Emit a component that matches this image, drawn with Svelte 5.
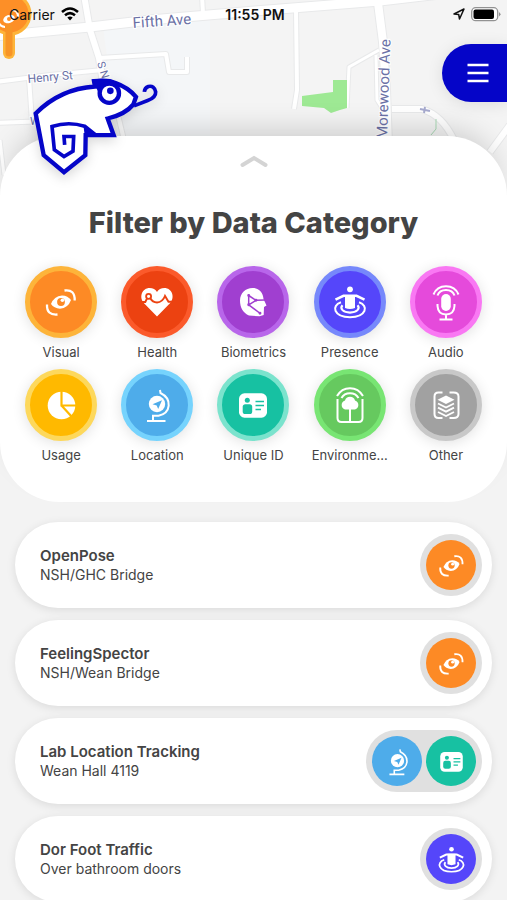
<script lang="ts">
  type Category = { id: string; label: string; fill: string; ring: string };

  const categories: Category[] = [
    { id: "visual", label: "Visual", fill: "#fd8a25", ring: "#fdb43a" },
    { id: "health", label: "Health", fill: "#ec4211", ring: "#fb5a2b" },
    { id: "biometrics", label: "Biometrics", fill: "#a03fd0", ring: "#b866ea" },
    { id: "presence", label: "Presence", fill: "#5546fa", ring: "#7688fb" },
    { id: "audio", label: "Audio", fill: "#e54adb", ring: "#f978f3" },
    { id: "usage", label: "Usage", fill: "#ffb900", ring: "#fdd85c" },
    { id: "location", label: "Location", fill: "#4eacea", ring: "#76d3fd" },
    { id: "unique", label: "Unique ID", fill: "#17c1a2", ring: "#7be3cd" },
    { id: "environment", label: "Environme...", fill: "#66c95f", ring: "#78e573" },
    { id: "other", label: "Other", fill: "#a1a1a1", ring: "#c8c8c8" },
  ];

  const items = [
    { name: "OpenPose", place: "NSH/GHC Bridge", tags: ["visual"] },
    { name: "FeelingSpector", place: "NSH/Wean Bridge", tags: ["visual"] },
    { name: "Lab Location Tracking", place: "Wean Hall 4119", tags: ["location", "unique"] },
    { name: "Dor Foot Traffic", place: "Over bathroom doors", tags: ["presence"] },
  ];

  const streets = [
    { d: "M-5 36 L90 27 L150 20 L255 11 L380 1 L440 -6", w: 10 },
    { d: "M84 -5 L90 30 L99 58 L103 82", w: 7 },
    { d: "M99 58 L166 54 L169 72 L187 72 L187 57", w: 5 },
    { d: "M-5 82 L50 75 L103 70", w: 5 },
    { d: "M29 78 L32 122", w: 5 },
    { d: "M-5 123 L50 121", w: 5 },
    { d: "M118 115 L124 140", w: 5 },
    { d: "M202 -5 L203 14", w: 5 },
    { d: "M296 10 L297 90 L294 109", w: 5 },
    { d: "M379 50 L349 67 L347 108", w: 4 },
    { d: "M376 55 L377 100 L387 116", w: 4 },
    { d: "M377 -5 L383 42 L386 90 L388 145", w: 9 },
    { d: "M392 109 L422 109 Q442 115 454 140", w: 7 },
    { d: "M515 118 L490 152", w: 7 },
    { d: "M0 140 L4 175", w: 4 },
  ];

  let selected = $state<string[]>([]);
  let expanded = $state(true);

  const byId = (id: string) => categories.find((c) => c.id === id)!;

  let shown = $derived(
    selected.length ? items.filter((i) => i.tags.some((t) => selected.includes(t))) : items,
  );

  function toggle(id: string) {
    selected = selected.includes(id) ? selected.filter((s) => s !== id) : [...selected, id];
  }
</script>

{#snippet icon(id: string, fill: string)}
  <svg class="icon" viewBox="0 0 36 36" fill="none" stroke="#fff" stroke-width="2" aria-hidden="true">
    {#if id === "visual"}
      <path d="M8 20 Q11 12 19 11.400 Q25 11.500 28 16 Q25 24.200 17 24.700 Q11 24.400 8 20Z" fill="#fff" stroke="none" />
      <circle cx="18" cy="18" r="3.900" fill={fill} stroke="none" />
      <circle cx="19.400" cy="16.300" r="1.800" fill="#fff" stroke="none" />
      <path d="M21.500 6.500 Q32 5 31.700 16.500 M4 20.500 Q3.500 31.500 14.500 30.500" stroke-width="2.300" />
    {:else if id === "health"}
      <path d="M18 32.500 L4.800 19 C-.5 12.500 3.500 4 10.500 4 C14 4 16.500 5.500 18 8 C19.500 5.500 22 4 25.500 4 C32.500 4 36.500 12.500 31.200 19Z" fill="#fff" stroke="none" />
      <path d="M2 18 H6.300 L8 14.500 M11.300 14.300 Q13.500 18.300 18 18.500 Q23.500 18.300 26 12 L29.500 17.800 H34" stroke={fill} stroke-width="1.900" />
      <circle cx="9.600" cy="12.300" r="2.500" stroke={fill} stroke-width="1.800" />
    {:else if id === "biometrics"}
      <path d="M17.500 4 C24 4 28 8.500 28.500 15 L31.500 21.500 L29 23 L28.700 31 L24.500 32.300 L14 31.500 C8 29 5 23.500 5 16.500 C5 9 10.500 4 17.500 4Z" fill="#fff" stroke="none" />
      <g stroke={fill} stroke-width="1.500">
        <path d="M13.700 11.500 L21 16.300 L13.700 20.800Z M21 16.300 L30 16 M13.700 20.800 L25.300 29.500" />
        <circle cx="13.700" cy="11.500" r=".7" fill={fill} />
        <circle cx="21" cy="16.300" r=".7" fill={fill} />
        <circle cx="13.700" cy="20.800" r=".7" fill={fill} />
        <circle cx="25" cy="29.300" r=".7" fill={fill} />
      </g>
    {:else if id === "presence"}
      <circle cx="18" cy="5.300" r="2.900" fill="#fff" stroke="none" />
      <path d="M3.500 15.700 L11.500 11.800 H24.500 L32.500 15.700" stroke-width="2.600" />
      <path d="M13 11 H23 V24 Q18 26 13 24Z" fill="#fff" stroke="none" />
      <path d="M9 18.300 C-1 21.500 1.500 33.200 18 33.200 C34.500 33.200 37 21.500 27 18.300" stroke-width="2.100" />
      <path d="M10.500 21.200 C7.500 24.500 11 28.600 18 28.600 C25 28.600 28.500 24.500 25.500 21.200" stroke-width="2.100" />
    {:else if id === "audio"}
      <rect x="13.200" y="10" width="9.600" height="17" rx="4.800" fill="#fff" stroke="none" />
      <path d="M9.500 20 V22 Q10 30.500 18 30.500 Q26 30.500 26.500 22 V20 M18 30.500 V35.500 M11.500 35.500 H24.500" />
      <path d="M5.500 10.500 C10 -.5 26 -.5 30.500 10.500 M9.500 11.500 C12 4 24 4 26.500 11.500" />
    {:else if id === "usage"}
      <circle cx="18.500" cy="18.500" r="13.800" fill="#fff" stroke="none" />
      <path d="M18.500 4 V18.500 H33 M18.500 18.500 L29 30" stroke={fill} stroke-width="2.200" />
    {:else if id === "location"}
      <circle cx="18" cy="17" r="8.200" fill="#fff" stroke="none" />
      <path d="M13.500 17.300 L23 13.300 L19.200 22 L17.700 18.500Z" fill={fill} stroke="none" />
      <path d="M21 3 L21.500 6 C33.500 12 32 26 19.500 28.800 H14 V34 M8 34 H26.500" />
    {:else if id === "unique"}
      <rect x="4" y="6.300" width="28" height="24.400" rx="5.500" fill="#fff" stroke="none" />
      <circle cx="12.300" cy="13.300" r="2.500" fill={fill} stroke="none" />
      <rect x="7.700" y="17.200" width="9.500" height="9.800" rx="2.600" fill={fill} stroke="none" />
      <path d="M20.500 14.500 H29 M20.500 18.500 H29 M20.500 22.500 H26" stroke={fill} stroke-width="1.700" />
    {:else if id === "environment"}
      <path d="M5 9 C11 -1.500 25 -1.500 31 9 M9.500 11 C13 4.500 23 4.500 26.500 11" />
      <path d="M5.500 12 V31 Q5.500 35 9.500 35 H26.500 Q30.500 35 30.500 31 V12" />
      <path d="M13 22.500 A4.700 4.700 0 0 1 13 13.500 A5.200 5.200 0 0 1 23 13.500 A4.700 4.700 0 0 1 23 22.500Z" fill="#fff" stroke="none" />
      <path d="M18 22 V35" />
    {:else}
      <path d="M14.500 5.500 H10.500 Q6.500 5.500 6.500 9.500 V27 Q6.500 31 10.500 31 H14.500 M21.500 5.500 H25.500 Q30.500 5.500 30.500 9.500 V27 Q30.500 31 25.500 31 H21.500" />
      <path d="M18 8.500 L26.500 12.800 L18 17 L9.500 12.800Z" fill="#fff" stroke="none" />
      <path d="M10 16.500 L18 20.500 L26 16.500 M10 20.700 L18 24.700 L26 20.700 M10 25 L18 29 L26 25" stroke-width="1.900" />
    {/if}
  </svg>
{/snippet}

<div class="app">
  <svg class="map" viewBox="0 0 507 200" preserveAspectRatio="xMinYMin slice" aria-hidden="true">
    <rect width="507" height="200" fill="#f4f4f4" />
    <path d="M103 27 L210 18 V140 H118Z" fill="#f4f6f8" />
    {#each streets as s}
      <path d={s.d} fill="none" stroke="#e8e9ea" stroke-width={s.w + 1} stroke-linejoin="round" />
    {/each}
    {#each streets as s}
      <path d={s.d} fill="none" stroke="#fff" stroke-width={s.w - 1} stroke-linejoin="round" />
    {/each}
    <path d="M302 96 L333 92 V80 H347 V108 Q339 110 331 113 L324 108 L302 106Z" fill="#9ee994" />
    <path d="M436 119 V129 L431 135" fill="none" stroke="#a9d9b5" />
    <path d="M420 109 L430 111 M425 107 L424 113" stroke="#a7abcf" stroke-width="2" />
    <g class="street-name">
      <text x="133" y="28" font-size="15" transform="rotate(-4 133 28)">Fifth Ave</text>
      <text x="28" y="83" font-size="12" transform="rotate(-5 28 83)">Henry St</text>
      <text x="97" y="63" font-size="11" transform="rotate(72 97 63)">S N</text>
      <text x="30" y="125" font-size="11">W</text>
      <text x="387" y="139" font-size="15" transform="rotate(-88 387 139)">Morewood Ave</text>
    </g>
    <g class="pin">
      <path d="M9 30 V53" stroke="#fdb43a" stroke-width="12" stroke-linecap="round" />
      <circle cx="10" cy="14" r="20" fill="#fd8f27" stroke="#fdb43a" stroke-width="3" />
      <path d="M9 28 V53" stroke="#f79427" stroke-width="7" stroke-linecap="round" />
      <ellipse cx="9" cy="19" rx="6" ry="4" fill="#fff" transform="rotate(-20 9 19)" />
      <circle cx="9" cy="19" r="2" fill="#fd8f27" />
      <path d="M-2 21 Q0 27 5 27 M12 10 Q18 10 18 17" fill="none" stroke="#fff" stroke-width="2" />
    </g>
  </svg>

  <header class="top">
    <div class="status">
      <div class="carrier">
        <span>Carrier</span>
        <svg width="18" height="14" viewBox="0 0 18 14" fill="none" stroke="#000" stroke-width="2.500" aria-hidden="true">
          <path d="M1 5 Q9 -2 17 5 M4 8.300 Q9 4 14 8.300" />
          <path d="M6.300 10.500 Q9 8.300 11.700 10.500 L9 13.500Z" fill="#000" stroke="none" />
        </svg>
      </div>
      <time>11:55 PM</time>
      <div class="power">
        <svg width="12" height="12" viewBox="0 0 12 12" aria-hidden="true">
          <path d="M1 6 L11 1 L6.500 11 L5.700 6.500Z" fill="none" stroke="#111" stroke-width="1.500" stroke-linejoin="round" />
        </svg>
        <svg width="30" height="15" viewBox="0 0 30 15" aria-hidden="true">
          <rect x=".7" y=".7" width="26" height="13" rx="4" fill="#fff" stroke="#929292" stroke-width="1.300" />
          <rect x="2.500" y="2.500" width="20.500" height="9.500" rx="2" fill="#000" />
          <path d="M28 5 Q31 7.300 28 9.500Z" fill="#929292" />
        </svg>
      </div>
    </div>

    <button class="menu" aria-label="Open menu">
      <svg width="22" height="20" viewBox="0 0 22 20" stroke="#fff" stroke-width="2.500" aria-hidden="true">
        <path d="M.5 2 H21.500 M.5 10 H21.500 M.5 18 H21.500" />
      </svg>
    </button>
  </header>

  <!-- Chameleon -->
  <svg class="logo" viewBox="90 225 390 305" stroke="#0505c8" stroke-width="13" aria-hidden="true">
    <path d="M107 340 Q180 266 285 259 L282 243 Q325 238 345 248 Q385 262 408 290 L400 313 Q375 343 323 355 L341 405 H257 L256 465 L192 516 L131 465Z" fill="#fff" />
    <path d="M276 238 Q320 232 345 243 L360 255 L300 285Z" fill="#0505c8" stroke="none" />
    <circle cx="328" cy="279" r="29" fill="#fff" />
    <circle cx="331" cy="272" r="10" fill="#0505c8" stroke="none" />
    <path d="M402 317 L443 301 Q468 292 467 275 Q463 255 445 259 Q434 263 433 275" fill="none" stroke-width="11" />
    <path d="M288 405 L254 378 Q205 363 156 379 L163 449 L192 469 L219 453 L221 409 H192 L194 434" fill="none" stroke-width="11" />
    <path d="M250 374 L292 405 H254Z" fill="#0505c8" stroke="none" />
  </svg>

  <section class="sheet">
    <button class="handle" aria-label="Toggle filters" aria-expanded={expanded} onclick={() => (expanded = !expanded)}>
      <svg width="28" height="14" viewBox="0 0 28 14" fill="none" stroke="#d4d4d4" stroke-width="4" stroke-linecap="round" aria-hidden="true">
        <path d="M2.500 11 L14 4 L25.500 11" />
      </svg>
    </button>
    <h1>Filter by Data Category</h1>
    {#if expanded}
      <div class="categories">
        {#each categories as c}
          <button class="category" aria-pressed={selected.includes(c.id)} onclick={() => toggle(c.id)}>
            <span class="disc" style="background: {c.fill}; border-color: {c.ring}">
              {@render icon(c.id, c.fill)}
            </span>
            <span class="label">{c.label}</span>
          </button>
        {/each}
      </div>
    {/if}
  </section>

  <ul class="list">
    {#each shown as item}
      <li class="card">
        <div class="info">
          <h2>{item.name}</h2>
          <p>{item.place}</p>
        </div>
        <div class="tags">
          {#each item.tags as t}
            <span class="tag" style="background: {byId(t).fill}">
              {@render icon(t, byId(t).fill)}
            </span>
          {/each}
        </div>
      </li>
    {/each}
  </ul>
</div>

<style>
  :global(body) {
    background: #f3f3f3;
  }

  .app {
    position: relative;
    height: 100vh;
    overflow: hidden;
    font-family: Inter, Roboto, "Liberation Sans", sans-serif;
    color: #444;
  }

  .map {
    position: absolute;
    top: 0;
    left: 0;
    width: 100%;
    height: 200px;
  }

  .street-name {
    fill: #6b71a6;
    stroke: #fff;
    stroke-width: 2px;
    paint-order: stroke;
    font-family: Roboto, sans-serif;
  }

  .top {
    position: relative;
    height: 136px;
    display: flex;
    flex-direction: column;
    gap: 16px;
  }

  .status {
    display: grid;
    grid-template-columns: 1fr auto 1fr;
    align-items: center;
    height: 28px;
    padding: 0 6px 0 9px;
    font-size: 14px;
    color: #111;
  }

  .status time {
    font-weight: 600;
  }

  .carrier,
  .power {
    display: flex;
    align-items: center;
    gap: 6px;
  }

  .power {
    justify-content: flex-end;
  }

  button {
    border: 0;
    padding: 0;
    background: none;
    font: inherit;
    color: inherit;
    cursor: pointer;
  }

  .menu {
    align-self: flex-end;
    display: flex;
    align-items: center;
    justify-content: center;
    width: 65px;
    height: 58px;
    padding-left: 6px;
    border-radius: 29px 0 0 29px;
    background: #0505c8;
    box-shadow: 0 2px 16px rgba(0, 0, 0, 0.1);
  }

  .logo {
    position: absolute;
    z-index: 2;
    top: 75px;
    left: 30px;
    width: 130px;
    height: 102px;
    filter: drop-shadow(0 4px 6px rgba(0, 0, 0, 0.15));
  }

  .sheet {
    position: relative;
    display: flex;
    flex-direction: column;
    padding: 16px 13px 38px;
    border-radius: 60px;
    background: #fff;
    box-shadow: 0 -16px 30px -12px rgba(0, 0, 0, 0.18);
  }

  .handle {
    align-self: center;
    display: flex;
    align-items: center;
    height: 18px;
  }

  h1 {
    margin: 35px 0 25px;
    font-size: 29px;
    line-height: 36px;
    font-weight: 800;
    text-align: center;
  }

  .categories {
    display: grid;
    grid-template-columns: repeat(5, minmax(0, 1fr));
    row-gap: 8px;
  }

  .category {
    display: flex;
    flex-direction: column;
    align-items: center;
    gap: 5px;
  }

  .disc {
    box-sizing: border-box;
    display: flex;
    align-items: center;
    justify-content: center;
    width: 72px;
    height: 72px;
    border: 5px solid;
    border-radius: 50%;
    box-shadow: 0 2px 14px rgba(0, 0, 0, 0.12);
  }

  .disc .icon {
    width: 36px;
    height: 36px;
  }

  .icon {
    overflow: visible;
  }

  .label {
    white-space: nowrap;
    font-size: 13px;
    line-height: 18px;
  }

  .list {
    display: flex;
    flex-direction: column;
    gap: 12px;
    margin: 0;
    padding: 20px 15px;
    list-style: none;
  }

  .card {
    box-sizing: border-box;
    display: flex;
    align-items: center;
    justify-content: space-between;
    min-height: 86px;
    padding: 12px 10px 12px 25px;
    border-radius: 43px;
    background: #fff;
    box-shadow: 0 2px 10px rgba(0, 0, 0, 0.1);
  }

  .card h2,
  .card p {
    margin: 0;
    font-size: 14px;
    line-height: 19px;
  }

  .card h2 {
    font-size: 15px;
    font-weight: 600;
  }

  .tags {
    display: flex;
    gap: 4px;
    padding: 6px;
    border-radius: 31px;
    background: #e0e0e0;
  }

  .tag {
    display: flex;
    align-items: center;
    justify-content: center;
    width: 50px;
    height: 50px;
    border-radius: 50%;
  }

  .tag .icon {
    width: 29px;
    height: 29px;
  }
</style>
